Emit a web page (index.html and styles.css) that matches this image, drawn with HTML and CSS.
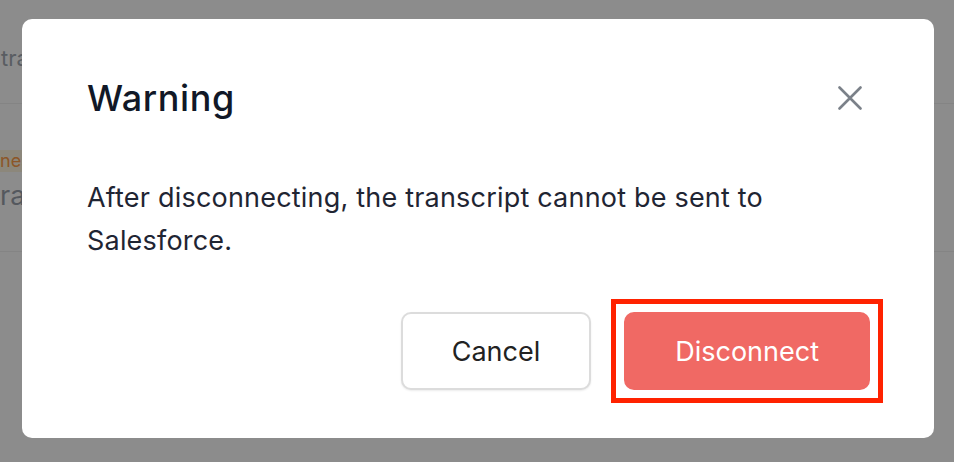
FILE: index.html
```html
<!DOCTYPE html>
<html lang="en">
  <head>
    <meta charset="UTF-8" />
    <meta name="viewport" content="width=device-width, initial-scale=1.0" />
    <title>Warning</title>
    <link rel="stylesheet" href="styles.css">
  </head>
  <body>
    <!-- page behind the dialog -->
    <div class="page">
      <div class="row row-head">
        <span class="row-title">transcripts</span>
      </div>
      <div class="row row-item">
        <span class="tag">nes</span>
        <span class="row-text">ransfer</span>
      </div>
    </div>

    <div class="overlay">
      <div class="modal" role="dialog" aria-labelledby="modalTitle">
        <div class="modal-header">
          <h2 id="modalTitle">Warning</h2>
          <button class="close-btn" aria-label="Close">
            <svg width="24" height="24" viewBox="0 0 24 24" fill="none">
              <path d="M1.5 1.5L22.5 22.5M22.5 1.5L1.5 22.5" stroke="#7b8189" stroke-width="2.6" stroke-linecap="round" />
            </svg>
          </button>
        </div>
        <p class="modal-body">
          After disconnecting, the transcript cannot be sent to Salesforce.
        </p>
        <div class="modal-footer">
          <button class="btn btn-cancel">Cancel</button>
          <button class="btn btn-danger highlight">Disconnect</button>
        </div>
      </div>
    </div>
  </body>
</html>
```

FILE: styles.css
```css
body {
  margin: 0;
  width: 954px;
  height: 462px;
  overflow: hidden;
  background-color: #fff;
  font-family: Inter, "Noto Sans", sans-serif;
}

/* Contenu derrière la modale */
.page {
  width: 100%;
}

.row {
  border-bottom: 1px solid #f0f0f0;
  white-space: nowrap;
  overflow: hidden;
}

.row-head {
  height: 104px;
  box-sizing: border-box;
  padding: 43px 0 0 1px;
}

.row-title {
  font-size: 22px;
  line-height: 30px;
  color: #a3a9b2;
}

.row-item {
  height: 148px;
  box-sizing: border-box;
  padding-top: 46px;
}

.tag {
  display: block;
  width: 80px;
  height: 22px;
  line-height: 22px;
  font-size: 18px;
  color: #ff9d48;
  background-color: #fff6e0;
  margin-bottom: 6px;
}

.row-text {
  display: block;
  font-size: 27px;
  line-height: 36px;
  color: #9aa1ab;
}

/* Modale */
.overlay {
  position: fixed;
  top: 0;
  left: 0;
  width: 100%;
  height: 100%;
  background-color: rgba(0, 0, 0, 0.45);
  display: flex;
  align-items: flex-start;
  padding: 19px 0 0 22px;
  box-sizing: border-box;
}

.modal {
  width: 912px;
  height: 419px;
  box-sizing: border-box;
  background-color: #fff;
  border-radius: 10px;
  padding: 59px 64px 0 65px;
}

.modal-header {
  display: flex;
  align-items: center;
  justify-content: space-between;
  height: 40px;
}

.modal-header h2 {
  margin: 0;
  font-size: 36px;
  line-height: 40px;
  font-weight: 500;
  letter-spacing: 0.6px;
  color: #111827;
}

.close-btn {
  display: flex;
  background: none;
  border: none;
  padding: 0;
  margin-right: 8px;
  cursor: pointer;
}

.modal-body {
  margin: 58px 0 0;
  font-size: 27px;
  line-height: 43px;
  letter-spacing: 0.2px;
  color: #1f2533;
  width: 700px;
}

.modal-footer {
  display: flex;
  justify-content: flex-end;
  gap: 33px;
  margin-top: 50px;
}

.btn {
  height: 78px;
  padding: 0 49px;
  border: 2px solid transparent;
  border-radius: 10px;
  font-family: Inter, "Noto Sans", sans-serif;
  font-size: 27px;
  cursor: pointer;
}

.btn-cancel {
  background-color: #fff;
  border-color: #dcdcdc;
  color: #222;
  box-shadow: 0 1px 2px rgba(0, 0, 0, 0.08);
}

.btn-danger {
  background-color: #f06964;
  border-color: #f06964;
  color: #fff;
}

/* Cadre rouge d'annotation */
.highlight {
  position: relative;
}

.highlight::after {
  content: "";
  position: absolute;
  top: -15px;
  left: -15px;
  right: -15px;
  bottom: -15px;
  border: 5px solid #ff2200;
  pointer-events: none;
}
```
